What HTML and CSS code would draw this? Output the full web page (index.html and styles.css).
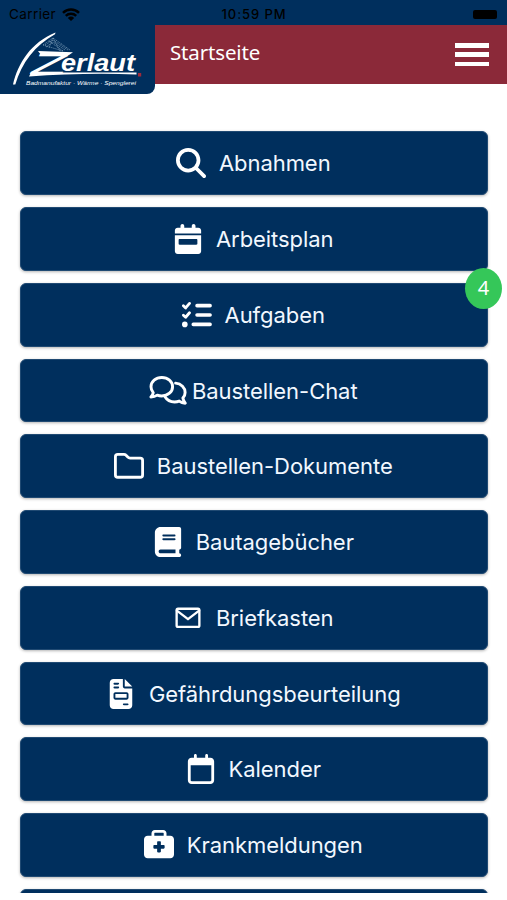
FILE: index.html
```html
<!DOCTYPE html>
<html lang="de">
<head>
  <meta charset="utf-8">
  <title>Startseite</title>
  <meta name="viewport" content="width=device-width, initial-scale=1">
  <link rel="stylesheet" href="styles.css">
</head>
<body>
  <div class="statusbar">
    <div class="carrier">
      <span>Carrier</span>
      <svg class="wifi" viewBox="0 0 18 13">
        <path d="M1 4.8a11.5 11.5 0 0 1 16 0M3.8 7.8a7.5 7.5 0 0 1 10.4 0" fill="none" stroke="#000" stroke-width="2.5"/>
        <path d="M9 13 5.8 9.9a4.6 4.6 0 0 1 6.4 0z"/>
      </svg>
    </div>
    <div class="time">10:59 PM</div>
    <div class="battery"><span></span></div>
  </div>

  <header class="header">
    <div class="logo">
      <svg viewBox="0 0 155 69">
        <path d="M13 59.500C18 38 31 17.500 55.500 7.500L55 9.200C35 20 21.500 38 15.300 59.500z" fill="#fff"/>
        <path d="M43 20 53 13l17 12M45 20l8-5 15 10M46 22l7-5 12 8M43 20l20 6M49 16l14 10M53 13l7 13M53 13l-4 10" fill="none" stroke="#8ba9c2" stroke-width=".7" stroke-dasharray="1.200 .8"/>
        <text class="logo-z" x="31" y="48.500" textLength="36" lengthAdjust="spacingAndGlyphs">Z</text>
        <path d="M38 26l35 1.200-4 2.800H41zM31 47.500h105.500v2C100 48 64 49 29 51.500z" fill="#fff"/>
        <text class="logo-name" x="61" y="46" textLength="74" lengthAdjust="spacingAndGlyphs">erlaut</text>
        <rect x="138" y="48" width="3.200" height="3.500" fill="#a02a3b"/>
        <text class="logo-sub" x="26" y="59.700" textLength="110" lengthAdjust="spacingAndGlyphs">Badmanufaktur · Wärme · Spenglerei</text>
      </svg>
    </div>
    <h1>Startseite</h1>
    <button class="menu" aria-label="Menü"><span></span><span></span><span></span></button>
  </header>

  <main class="list">
    <a class="item">
      <svg class="icon" viewBox="0 0 512 512"><path d="M416 208c0 45.900-14.900 88.300-40 122.700L502.600 457.400c12.500 12.500 12.500 32.800 0 45.300s-32.800 12.500-45.300 0L330.700 376c-34.400 25.200-76.800 40-122.700 40C93.100 416 0 322.900 0 208S93.100 0 208 0S416 93.100 416 208zM208 352a144 144 0 1 0 0-288 144 144 0 1 0 0 288z"/></svg>
      <span class="label">Abnahmen</span>
    </a>
    <a class="item">
      <svg class="icon" viewBox="-32 0 512 512"><path d="M128 0c17.700 0 32 14.300 32 32v32h128V32c0-17.700 14.300-32 32-32s32 14.300 32 32v32h48c26.500 0 48 21.500 48 48v48H0v-48c0-26.500 21.500-48 48-48h48V32c0-17.700 14.300-32 32-32zM0 192h448v272c0 26.500-21.500 48-48 48H48c-26.500 0-48-21.500-48-48zm80 64c-8.800 0-16 7.200-16 16v64c0 8.800 7.200 16 16 16h288c8.800 0 16-7.200 16-16v-64c0-8.800-7.200-16-16-16z"/></svg>
      <span class="label">Arbeitsplan</span>
    </a>
    <a class="item">
      <svg class="icon line" viewBox="0 0 512 512"><g stroke-width="60"><path d="M256 96h224M256 256h224M192 416h288"/></g><g stroke-width="48"><path d="m24 99 38 36 66-77M24 259l38 36 66-77"/></g><circle class="solid" cx="48" cy="416" r="48"/></svg>
      <span class="label">Aufgaben</span>
      <span class="badge">4</span>
    </a>
    <a class="item">
      <svg class="icon icon-wide line" viewBox="0 0 640 512"><g stroke-width="50"><path d="M214 26c104 0 184 70 184 157s-80 157-184 157c-28 0-54-5-77-14-27 18-62 31-109 31 19-20 35-44 40-73-24-27-38-62-38-101C30 96 110 26 214 26z"/><path d="M450 122c96 9 162 76 162 158 0 37-13 69-38 96 5 34 21 62 40 88-44-2-77-17-103-36-24 10-50 15-79 15-72 0-131-34-160-83"/></g></svg>
      <span class="label">Baustellen-Chat</span>
    </a>
    <a class="item">
      <svg class="icon line" viewBox="0 0 512 512"><path stroke-width="48" d="M64 56h106c12 0 23 4 31 13l34 34c11 11 23 17 39 17h174c22 0 40 18 40 40v248c0 22-18 40-40 40H64c-22 0-40-18-40-40V96c0-22 18-40 40-40z"/></svg>
      <span class="label">Baustellen-Dokumente</span>
    </a>
    <a class="item">
      <svg class="icon" viewBox="-32 0 512 512"><path d="M96 0C43 0 0 43 0 96v320c0 53 43 96 96 96h320c17.700 0 32-14.300 32-32s-14.300-32-32-32v-64c17.700 0 32-14.300 32-32V32c0-17.700-14.300-32-32-32zm0 384h256v64H96c-17.700 0-32-14.300-32-32s14.300-32 32-32zm32-240c0-8.800 7.200-16 16-16h192c8.800 0 16 7.200 16 16s-7.200 16-16 16H144c-8.800 0-16-7.200-16-16zm16 48h192c8.800 0 16 7.200 16 16s-7.200 16-16 16H144c-8.800 0-16-7.200-16-16s7.200-16 16-16z"/></svg>
      <span class="label">Bautagebücher</span>
    </a>
    <a class="item">
      <svg class="icon line" viewBox="0 0 512 512"><g stroke-width="40"><rect x="62" y="98" width="388" height="310" rx="24"/><path d="m66 130 190 146 190-146"/></g></svg>
      <span class="label">Briefkasten</span>
    </a>
    <a class="item">
      <svg class="icon" viewBox="-64 0 512 512"><path d="M64 0C28.700 0 0 28.700 0 64v384c0 35.300 28.700 64 64 64h256c35.300 0 64-28.700 64-64V160H256c-17.700 0-32-14.300-32-32V0zm192 0v128h128zM80 64h64c8.800 0 16 7.200 16 16s-7.200 16-16 16H80c-8.800 0-16-7.200-16-16s7.200-16 16-16zm0 64h64c8.800 0 16 7.200 16 16s-7.200 16-16 16H80c-8.800 0-16-7.200-16-16s7.200-16 16-16zm16 96h192c17.700 0 32 14.300 32 32v64c0 17.700-14.300 32-32 32H96c-17.700 0-32-14.300-32-32v-64c0-17.700 14.300-32 32-32zm0 32v64h192v-64zm144 160h64c8.800 0 16 7.200 16 16s-7.200 16-16 16h-64c-8.800 0-16-7.200-16-16s7.200-16 16-16z"/></svg>
      <span class="label">Gefährdungsbeurteilung</span>
    </a>
    <a class="item">
      <svg class="icon" viewBox="-32 0 512 512"><path d="M128 0c13.300 0 24 10.700 24 24v40h144V24c0-13.300 10.700-24 24-24s24 10.700 24 24v40h40c35.300 0 64 28.700 64 64v320c0 35.300-28.700 64-64 64H64c-35.300 0-64-28.700-64-64V128c0-35.300 28.700-64 64-64h40V24c0-13.300 10.700-24 24-24zm272 192H48v256c0 8.800 7.200 16 16 16h320c8.800 0 16-7.200 16-16z"/></svg>
      <span class="label">Kalender</span>
    </a>
    <a class="item">
      <svg class="icon" viewBox="0 0 512 512"><path d="M184 48h144c4.400 0 8 3.600 8 8v40H176V56c0-4.400 3.600-8 8-8zm-56 8v40H64c-35.300 0-64 28.700-64 64v256c0 35.300 28.700 64 64 64h384c35.300 0 64-28.700 64-64V160c0-35.300-28.700-64-64-64h-64V56c0-30.900-25.100-56-56-56H184c-30.900 0-56 25.100-56 56zm96 152c0-8.800 7.200-16 16-16h32c8.800 0 16 7.200 16 16v48h48c8.800 0 16 7.200 16 16v32c0 8.800-7.200 16-16 16h-48v48c0 8.800-7.200 16-16 16h-32c-8.800 0-16-7.200-16-16v-48h-48c-8.800 0-16-7.200-16-16v-32c0-8.800 7.200-16 16-16h48z"/></svg>
      <span class="label">Krankmeldungen</span>
    </a>
    <a class="item"></a>
  </main>
</body>
</html>
```

FILE: styles.css
```css
* {
  box-sizing: border-box;
}
body {
  margin: 0;
  height: 900px;
  overflow: hidden;
  background-color: #fff;
  font-family: Inter, sans-serif;
}
.statusbar {
  display: grid;
  grid-template-columns: 1fr auto 1fr;
  align-items: center;
  height: 25px;
  padding: 3px 10px 0 9px;
  background-color: #002f5d;
  color: #000;
  font-size: 13.5px;
}
.carrier {
  display: flex;
  align-items: center;
  gap: 6px;
  letter-spacing: 0.4px;
}
.wifi {
  width: 18px;
  height: 13px;
}
.time {
  padding-left: 2px;
  font-size: 13px;
  font-weight: 500;
  letter-spacing: 0.9px;
}
.battery {
  display: flex;
  justify-content: flex-end;
}
.battery span {
  width: 24px;
  height: 9px;
  border-radius: 2px;
  background-color: #000;
}
.header {
  display: flex;
  height: 58.5px;
  background-color: #8b2939;
}
.logo {
  width: 155px;
  height: 69px;
  flex: none;
  background-color: #002f5d;
  border-radius: 0 0 8px 0;
}
.logo svg {
  display: block;
  width: 155px;
  height: 69px;
}
.logo text {
  fill: #fff;
  font-family: "Liberation Sans", Arial, sans-serif;
  font-style: italic;
}
.logo .logo-z {
  font-size: 29px;
}
.logo .logo-name {
  font-size: 23px;
  font-weight: bold;
}
.logo .logo-sub {
  font-size: 6.2px;
}
h1 {
  flex: 1;
  margin: 0 0 0 15px;
  color: #fff;
  font-family: "Noto Sans", sans-serif;
  font-size: 20.5px;
  font-weight: 400;
  line-height: 55px;
  letter-spacing: -0.15px;
}
.menu {
  display: flex;
  flex-direction: column;
  gap: 4.75px;
  margin: 18px 18.5px 0 0;
  padding: 0;
  border: none;
  background: none;
}
.menu span {
  width: 34px;
  height: 4.5px;
  background-color: #fff;
}
.list {
  display: flex;
  flex-direction: column;
  gap: 12px;
  height: 809px;
  padding: 47.9px 19px 0 20px;
  overflow: hidden;
}
.item {
  position: relative;
  display: flex;
  flex: none;
  align-items: center;
  justify-content: center;
  gap: 12.5px;
  height: 63.75px;
  padding-right: 1px;
  border: 1px solid #204a73;
  border-radius: 6px;
  background-color: #002f5d;
  box-shadow: 0 1px 3px rgba(0, 0, 0, 0.3);
  color: #f2f8ff;
}
.icon {
  width: 30px;
  height: 30px;
  fill: #fff;
  fill-rule: evenodd;
}
.icon-wide {
  width: 38px;
  margin-right: -8px;
}
.line {
  fill: none;
  stroke: #fff;
  stroke-linecap: round;
  stroke-linejoin: round;
}
.solid {
  fill: #fff;
  stroke: none;
}
.label {
  font-size: 22px;
  letter-spacing: -0.05px;
}
.badge {
  position: absolute;
  top: -16px;
  right: -15px;
  width: 37px;
  height: 41px;
  border-radius: 50%;
  background-color: #35c759;
  color: #fff;
  font-family: "Noto Sans", sans-serif;
  font-size: 20px;
  line-height: 39px;
  text-align: center;
}
```
